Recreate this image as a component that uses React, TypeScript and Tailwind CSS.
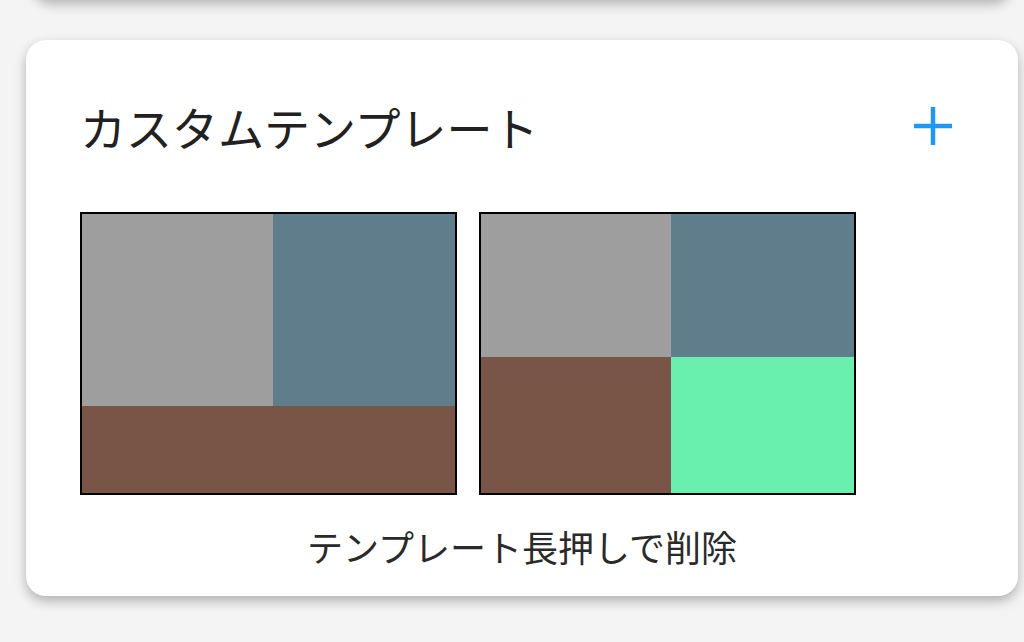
import React from 'react';

const jp = { fontFamily: '"Noto Sans CJK JP", "Noto Sans", sans-serif' };

function PlusIcon() {
  return (
    <svg width="44" height="44" viewBox="0 0 44 44" fill="none">
      <path d="M22 3v38M3 22h38" stroke="#2196f3" strokeWidth="4.5" strokeLinecap="butt" />
    </svg>
  );
}

export default function App() {
  return (
    <div className="h-[642px] overflow-hidden bg-[#f4f4f4] pl-[26px] pr-[6px] flex flex-col" style={jp}>
      {/* previous card, mostly scrolled out */}
      <div className="-mt-[30px] h-[30px] shrink-0 bg-white rounded-b-[20px] shadow-[0_4px_12px_rgba(0,0,0,0.28)] mx-[6px]" />

      {/* Custom templates card */}
      <div className="mt-[40px] bg-white rounded-[20px] shadow-[0_5px_12px_rgba(0,0,0,0.28)] pl-[54px] pr-[54px] pt-[63px] pb-[32px] flex flex-col">
        <div className="flex items-center justify-between h-[46px]">
          <h2 className="text-[46px] leading-none text-[#212121] font-normal">カスタムテンプレート</h2>
          <button className="mr-[9px]"><PlusIcon /></button>
        </div>

        <div className="flex gap-[22px] mt-[63px]">
          {/* template 1 */}
          <div className="w-[377px] h-[283px] border-2 border-black flex flex-col">
            <div className="flex h-[192px]">
              <div className="w-[191px] bg-[#9e9e9e]" />
              <div className="flex-1 bg-[#607d8b]" />
            </div>
            <div className="flex-1 bg-[#795548]" />
          </div>
          {/* template 2 */}
          <div className="w-[377px] h-[283px] border-2 border-black grid grid-cols-[190px_1fr] grid-rows-[143px_1fr]">
            <div className="bg-[#9e9e9e]" />
            <div className="bg-[#607d8b]" />
            <div className="bg-[#795548]" />
            <div className="bg-[#69f0ae]" />
          </div>
        </div>

        <p className="mt-[33px] text-center text-[36px] leading-none text-[#2a2a2a]">テンプレート長押しで削除</p>
      </div>
    </div>
  );
}
